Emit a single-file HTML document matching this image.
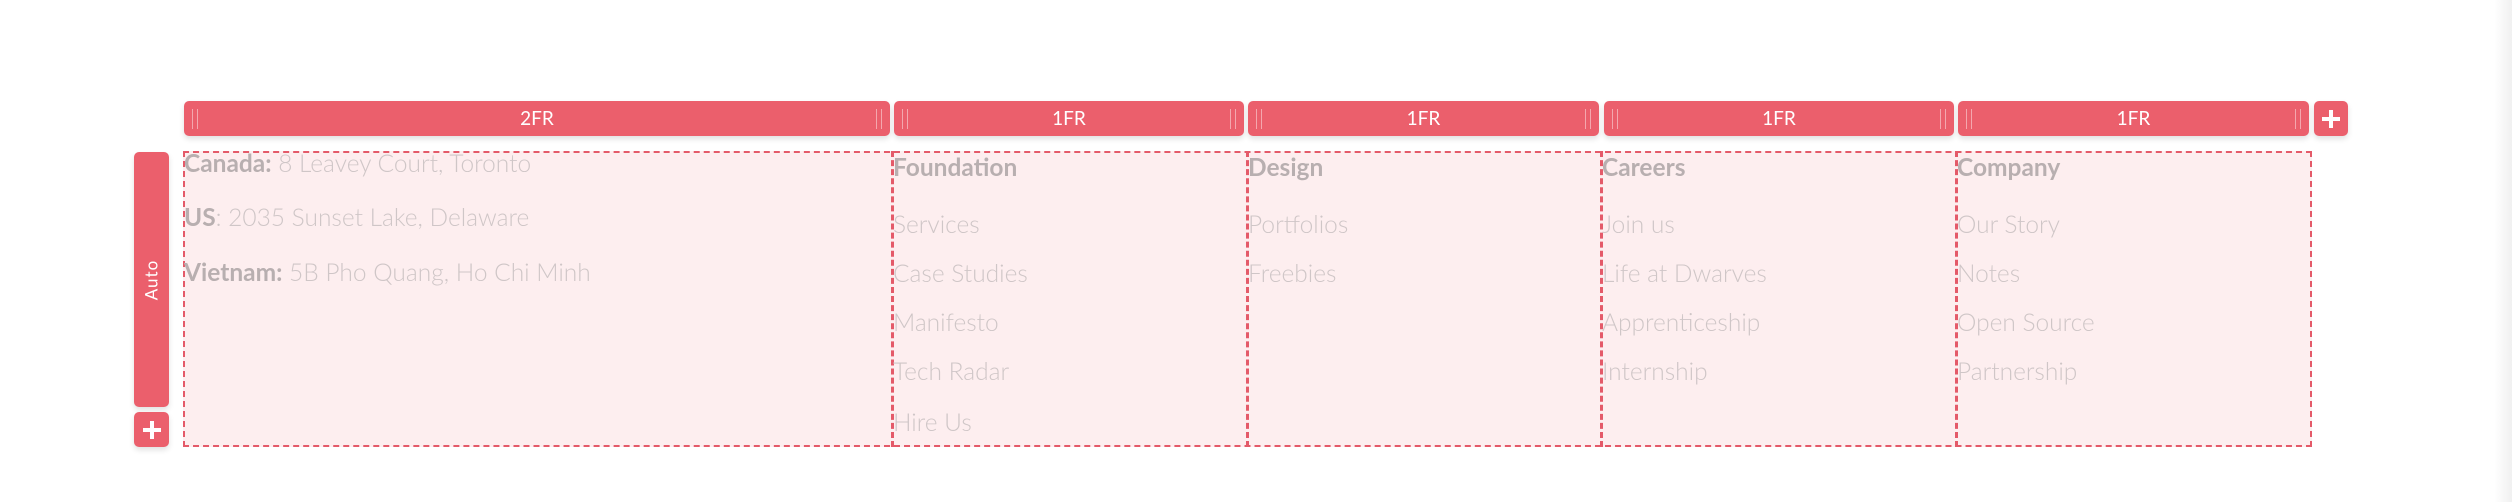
<!DOCTYPE html>
<html><head><meta charset="utf-8"><style>
*{margin:0;padding:0;box-sizing:border-box}
body{width:2512px;height:502px;background:#fff;position:relative;overflow:hidden;font-family:"Lato","Liberation Sans",sans-serif}
.bar{position:absolute;top:101px;height:35px;background:#eb5f6c;border-radius:5px;color:#fff;font-size:19px;text-align:center;line-height:35px;box-shadow:0 3px 6px rgba(0,0,0,0.12)}
.h::before,.h::after{content:"";position:absolute;top:8px;width:4px;height:20px;border-left:1.5px solid rgba(255,255,255,0.45);border-right:1.5px solid rgba(255,255,255,0.45)}
.h::before{left:8px}.h::after{right:8px}
.grid{position:absolute;left:183px;top:151px;width:2129px;height:296px;background:#fdeeef;border:2px dashed #e45a69}
.div{position:absolute;top:151px;height:296px;border-left:3px dashed #e45a69}
.col{position:absolute;top:0;font-size:24.5px;color:#cfc6c7;font-weight:300}
.col div{position:absolute;left:0;white-space:nowrap;height:30px;line-height:30px}
b{color:#b8afb0;font-weight:bold}
.plus{position:absolute;background:#eb5f6c;border-radius:5px;box-shadow:0 3px 6px rgba(0,0,0,0.12)}
.plus::before,.plus::after{content:"";position:absolute;background:#fff;left:50%;top:50%;transform:translate(-50%,-50%)}
.plus::before{width:18px;height:4px}.plus::after{width:4px;height:18px}
</style></head><body>
<div class="bar h" style="left:184px;width:706px">2FR</div>
<div class="bar h" style="left:894px;width:350px">1FR</div>
<div class="bar h" style="left:1248px;width:351px">1FR</div>
<div class="bar h" style="left:1604px;width:350px">1FR</div>
<div class="bar h" style="left:1958px;width:351px">1FR</div>
<div class="plus" style="left:2314px;top:101px;width:34px;height:35px"></div>
<div class="bar" style="left:134px;top:152px;width:35px;height:255px"></div>
<div style="position:absolute;left:151px;top:280px;transform:translate(-50%,-50%) rotate(-90deg);color:#fff;font-size:17px;letter-spacing:1px">Auto</div>
<div class="plus" style="left:134px;top:412px;width:35px;height:35px"></div>
<div class="grid"></div>
<div class="div" style="left:891px"></div>
<div class="div" style="left:1246px"></div>
<div class="div" style="left:1600px"></div>
<div class="div" style="left:1955px"></div>
<div class="col" style="left:184px">
<div style="top:149px"><b>Canada:</b> 8 Leavey Court, Toronto</div>
<div style="top:203px"><b>US</b>: 2035 Sunset Lake, Delaware</div>
<div style="top:258px"><b>Vietnam:</b> 5B Pho Quang, Ho Chi Minh</div>
</div>
<div class="col" style="left:893px">
<div style="top:153px"><b>Foundation</b></div>
<div style="top:210px">Services</div><div style="top:259px">Case Studies</div><div style="top:308px">Manifesto</div><div style="top:357px">Tech Radar</div><div style="top:408px">Hire Us</div>
</div>
<div class="col" style="left:1248px">
<div style="top:153px"><b>Design</b></div>
<div style="top:210px">Portfolios</div><div style="top:259px">Freebies</div>
</div>
<div class="col" style="left:1602px">
<div style="top:153px"><b>Careers</b></div>
<div style="top:210px">Join us</div><div style="top:259px">Life at Dwarves</div><div style="top:308px">Apprenticeship</div><div style="top:357px">Internship</div>
</div>
<div class="col" style="left:1957px">
<div style="top:153px"><b>Company</b></div>
<div style="top:210px">Our Story</div><div style="top:259px">Notes</div><div style="top:308px">Open Source</div><div style="top:357px">Partnership</div>
</div>
<div style="position:absolute;left:2494px;top:0;width:18px;height:502px;background:linear-gradient(to right,rgba(0,0,0,0),rgba(0,0,0,0.06))"></div>
</body></html>
